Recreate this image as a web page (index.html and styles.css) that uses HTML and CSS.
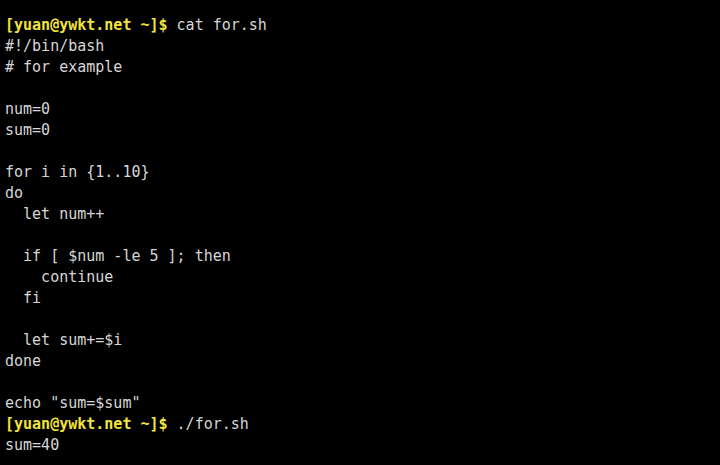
FILE: index.html
```html
<!DOCTYPE html>
<html>
<head>
<meta charset="utf-8">
<link rel="stylesheet" href="styles.css">
</head>
<body>
<pre class="term"><span class="prompt">[yuan@ywkt.net ~]$</span> cat for.sh
#!/bin/bash
# for example

num=0
sum=0

for i in {1..10}
do
  let num++

  if [ $num -le 5 ]; then
    continue
  fi

  let sum+=$i
done

echo "sum=$sum"
<span class="prompt">[yuan@ywkt.net ~]$</span> ./for.sh
sum=40</pre>
</body>
</html>
```
FILE: styles.css
```css
html, body {
  margin: 0;
  padding: 0;
  background: #000;
  height: 100%;
  overflow: hidden;
}
.term {
  margin: 0;
  padding: 15px 0 0 5px;
  font-family: "DejaVu Sans Mono", monospace;
  font-size: 15px;
  line-height: 21px;
  color: #d6d6d6;
}
.prompt {
  color: #f2e43a;
  font-weight: bold;
}
```
